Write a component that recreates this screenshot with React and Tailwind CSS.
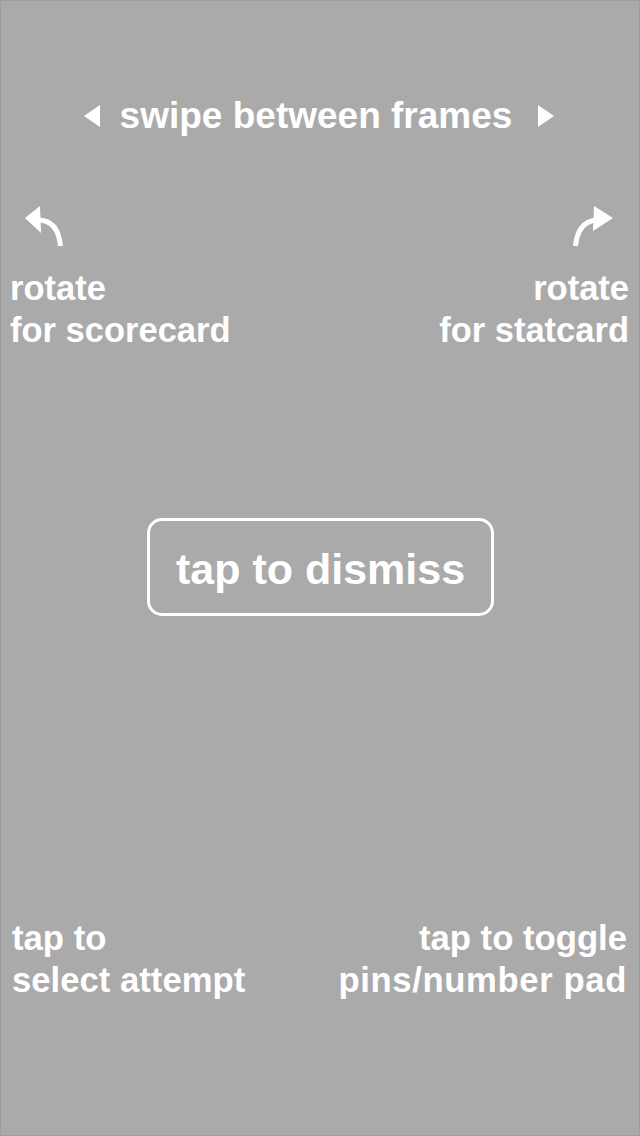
import React from "react";

const font = "font-['Liberation_Sans',Arial,Helvetica,sans-serif]";

function TriLeft() {
  return (
    <svg width="16" height="24" viewBox="0 0 16 24">
      <polygon points="0,12 16,1 16,23" fill="white" />
    </svg>
  );
}

function TriRight() {
  return (
    <svg width="16" height="24" viewBox="0 0 16 24">
      <polygon points="16,12 0,1 0,23" fill="white" />
    </svg>
  );
}

function RotateLeft() {
  return (
    <svg width="44" height="44" viewBox="0 0 44 44">
      <polygon points="3,14 18,2 19,29" fill="white" />
      <path d="M16 16 Q36 16 38.5 42" stroke="white" strokeWidth="5" fill="none" />
    </svg>
  );
}

function RotateRight() {
  return (
    <svg width="44" height="44" viewBox="0 0 44 44">
      <polygon points="41,14 22,2 21,27" fill="white" />
      <path d="M24 16 Q6 18 3.5 42" stroke="white" strokeWidth="5" fill="none" />
    </svg>
  );
}

export default function App() {
  return (
    <div className={`${font} h-[1136px] w-[640px] border border-[#9c9c9c] bg-[#aaaaaa] font-bold text-white flex flex-col`}>
      {/* swipe hint */}
      <div className="mt-[94px] flex items-center justify-center pr-[2px]">
        <TriLeft />
        <span className="ml-[20px] mr-[26px] text-[37px] leading-[42px]">swipe between frames</span>
        <TriRight />
      </div>

      {/* rotate hints */}
      <div className="mt-[67px] flex justify-between pl-[21px] pr-[23px]">
        <RotateLeft />
        <RotateRight />
      </div>
      <div className="mt-[19px] flex justify-between pl-[9px] pr-[10px] text-[34.5px] leading-[42px]">
        <div>
          <div>rotate</div>
          <div>for scorecard</div>
        </div>
        <div className="text-right">
          <div>rotate</div>
          <div>for statcard</div>
        </div>
      </div>

      {/* dismiss button */}
      <div className="mt-[167px] flex justify-center pl-[1px]">
        <div className="flex h-[98px] w-[347px] items-center justify-center rounded-[15px] border-[3px] border-white pt-[4px] text-[43px]">
          tap to dismiss
        </div>
      </div>

      {/* bottom hints */}
      <div className="mt-[301px] flex justify-between pl-[11px] pr-[12px] leading-[42px]">
        <div className="text-[34.7px]">
          <div>tap to</div>
          <div>select attempt</div>
        </div>
        <div className="text-right text-[34.7px]">
          <div>tap to toggle</div>
          <div className="tracking-[0.6px]">pins/number pad</div>
        </div>
      </div>
    </div>
  );
}
